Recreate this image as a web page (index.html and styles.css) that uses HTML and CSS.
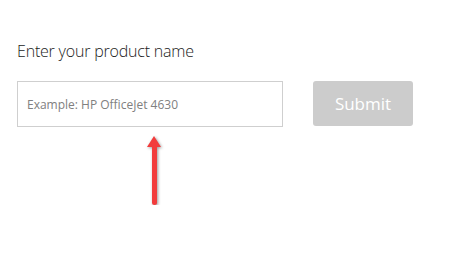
FILE: index.html
```html
<!DOCTYPE html>
<html>
<head>
<meta charset="utf-8">
<link rel="stylesheet" href="styles.css">
</head>
<body>
<div class="page">
  <h1 class="title">Enter your product name</h1>
  <div class="row">
    <input class="input" type="text" placeholder="Example: HP OfficeJet 4630">
    <button class="submit" type="button">Submit</button>
  </div>
  <div class="pointer">
    <div class="head"></div>
    <div class="shaft"></div>
  </div>
</div>
</body>
</html>
```
FILE: styles.css
```css
html, body {
  margin: 0;
  padding: 0;
  background: #fff;
}
.page {
  padding: 40px 0 0 17px;
  font-family: "Open Sans", "Liberation Sans", sans-serif;
}
.title {
  margin: 0;
  font-size: 16px;
  font-weight: 300;
  color: #1a1a1a;
  line-height: 22px;
  letter-spacing: -0.2px;
}
.row {
  display: flex;
  align-items: flex-start;
  gap: 30px;
  margin-top: 19px;
}
.input {
  box-sizing: border-box;
  width: 266px;
  height: 46px;
  border: 1px solid #cfcfcf;
  border-radius: 0;
  padding: 0 9px;
  font-family: "Open Sans", "Liberation Sans", sans-serif;
  font-size: 12px;
  color: #333;
  outline: none;
  display: block;
}
.input::placeholder {
  color: #808080;
}
.pointer {
  display: flex;
  flex-direction: column;
  align-items: center;
  width: 16px;
  margin: 9px 0 0 129px;
  filter: drop-shadow(1px 1px 1.5px rgba(0, 0, 0, 0.4));
}
.head {
  width: 0;
  height: 0;
  border-left: 7.5px solid transparent;
  border-right: 7.5px solid transparent;
  border-bottom: 11px solid #f23c3c;
}
.shaft {
  width: 5px;
  height: 58px;
  background: #f23c3c;
  border-radius: 0 0 2.5px 2.5px;
}
.submit {
  box-sizing: border-box;
  width: 100px;
  height: 45px;
  border: none;
  border-radius: 3px;
  background: #cccccc;
  color: #fff;
  font-family: "Open Sans", "Liberation Sans", sans-serif;
  font-size: 17px;
  padding: 0;
}
```
